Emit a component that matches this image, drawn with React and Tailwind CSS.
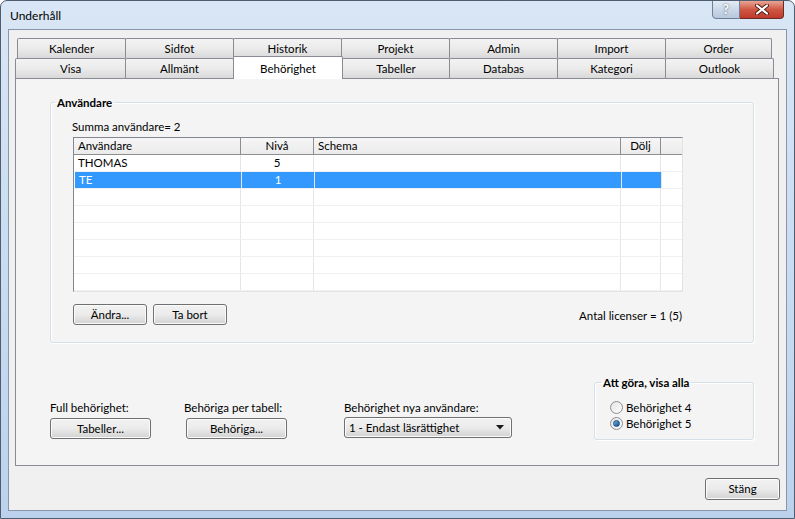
import React from "react";

const font = { fontFamily: '"Segoe UI", Lato, "Liberation Sans", sans-serif' };

const btnBase =
  "flex items-center h-[21px] rounded-[3px] border border-[#707070] bg-linear-to-b from-[#f2f2f2] via-[#ebebeb] to-[#d2d2d2] shadow-[inset_0_0_0_1px_#fbfbfb] text-[11.5px] text-black";
const btn = `${btnBase} justify-center`;

const rowTabs1 = [
  ["Kalender", "w-[109px]"],
  ["Sidfot", "w-[109px]"],
  ["Historik", "w-[109px]"],
  ["Projekt", "w-[109px]"],
  ["Admin", "w-[109px]"],
  ["Import", "w-[109px]"],
  ["Order", "w-[107px]"],
];

const rowTabs2 = [
  ["Visa", "w-[111px]"],
  ["Allmänt", "w-[109px]"],
  ["Behörighet", "w-[110px]"],
  ["Tabeller", "w-[108px]"],
  ["Databas", "w-[109px]"],
  ["Kategori", "w-[109px]"],
  ["Outlook", "w-[109px]"],
];

const users = [
  { name: "THOMAS", level: "5" },
  { name: "TE", level: "1", selected: true },
];

function Radio({ checked, label }) {
  return (
    <div className="flex items-center gap-[3px] h-[16px]">
      <div className="w-[13px] h-[13px] rounded-full border border-[#8e8f8f] bg-linear-to-br from-[#e6e6e6] to-[#fbfbfb] flex items-center justify-center">
        {checked && (
          <div className="w-[7px] h-[7px] rounded-full bg-linear-to-br from-[#6fb1e8] to-[#104f8f] border border-[#1b4f86]" />
        )}
      </div>
      <span className="text-[11.5px] text-black">{label}</span>
    </div>
  );
}

function Tab({ label, w, active }) {
  if (active) {
    return (
      <div
        className={`${w} -mr-px h-[23px] -mt-[2px] border border-b-0 border-[#898c95] rounded-t-[2px] bg-white flex items-start pt-[3px] justify-center text-[11.5px] text-black relative z-20`}
      >
        {label}
      </div>
    );
  }
  return (
    <div
      className={`${w} -mr-px border border-b-0 border-[#898c95] rounded-t-[2px] bg-linear-to-b from-[#f3f3f3] via-[#ebebeb] to-[#d9d9d9] flex items-center justify-center text-[11.5px] text-black`}
    >
      {label}
    </div>
  );
}

export default function App() {
  return (
    <div
      style={font}
      className="w-[795px] h-[519px] flex flex-col bg-linear-to-b from-[#d9e6f5] to-[#bcd2ec] border border-[#4e5d70] rounded-t-[7px] overflow-hidden"
    >
      {/* Title bar */}
      <div className="h-[28px] flex items-start">
        <div className="flex-1 pl-[9px] pt-[6px] text-[12px] text-black">Underhåll</div>
        <div className="flex mr-[10px] mt-[-1px]">
          <div className="w-[28px] h-[19px] border border-[#6f7f94] rounded-bl-[4px] bg-linear-to-b from-[#e4ecf5] via-[#cbd8e8] to-[#b7c8dc] flex items-center justify-center text-[13px] font-bold text-white [text-shadow:0_0_2px_#3c4a5c]">
            ?
          </div>
          <div className="w-[44px] h-[19px] border border-[#6b2a23] border-l-0 rounded-br-[4px] bg-linear-to-b from-[#e8a595] via-[#cf5744] to-[#c0392b] flex items-center justify-center">
            <svg width="14" height="11" viewBox="0 0 14 11">
              <path d="M2 1.5 L12 9.5 M12 1.5 L2 9.5" stroke="#4a1d18" strokeWidth="4" strokeLinecap="round" />
              <path d="M2 1.5 L12 9.5 M12 1.5 L2 9.5" stroke="#ffffff" strokeWidth="2.2" strokeLinecap="round" />
            </svg>
          </div>
        </div>
      </div>

      {/* Client area */}
      <div className="flex-1 mx-[7px] mb-[7px] bg-[#f0f0f0] border border-[#8796ab] flex flex-col">
        <div className="pl-[6px] pr-[8px] pt-[8px]">
          {/* Tab rows */}
          <div className="flex pl-[2px] h-[20px]">
            {rowTabs1.map(([t, w]) => (
              <Tab key={t} label={t} w={w} />
            ))}
          </div>
          <div className="flex h-[20px] relative z-10">
            {rowTabs2.map(([t, w]) => (
              <Tab key={t} label={t} w={w} active={t === "Behörighet"} />
            ))}
          </div>

          {/* Tab panel */}
          <div className="w-[764px] h-[388px] border border-[#898c95] bg-[#f4f4f4] flex flex-col">
            {/* Användare group */}
            <fieldset className="mt-[15px] ml-[34px] mr-[24px] h-[249px] border border-[#d5dfe5] rounded-[3px] shadow-[inset_1px_1px_0_#ffffff,1px_1px_0_#ffffff] pl-[21px] pr-[69px]">
              <legend className="-ml-[17px] px-[2px] text-[11.5px] font-bold text-black">Användare</legend>
              <div className="text-[11.5px] text-black mt-[9px] h-[14px] leading-[14px]">Summa användare= 2</div>

              {/* Table */}
              <div className="mt-[3px] ml-[1px] w-[610px] h-[155px] border border-[#828790] border-r-[#e3e3e3] border-b-[#e3e3e3] bg-white flex flex-col overflow-hidden">
                <div className="flex h-[17px] bg-linear-to-b from-[#f6f6f6] to-[#ebebeb] border-b border-[#8e8e8e] text-[11.5px] text-black leading-[16px]">
                  <div className="w-[167px] border-r border-[#8e8e8e] pl-[4px]">Användare</div>
                  <div className="w-[73px] border-r border-[#8e8e8e] text-center">Nivå</div>
                  <div className="w-[307px] border-r border-[#8e8e8e] pl-[4px]">Schema</div>
                  <div className="w-[40px] border-r border-[#8e8e8e] text-center">Dölj</div>
                  <div className="flex-1" />
                </div>
                {Array.from({ length: 8 }).map((_, i) => {
                  const u = users[i];
                  const sel = u && u.selected;
                  return (
                    <div key={i} className="flex h-[17px] text-[11.5px] leading-[16px] border-b border-[#f0f0f0]">
                      <div className={`w-[167px] border-r border-[#e6e6e6] pl-[4px] ${sel ? "bg-[#3399ff] text-white ml-[1px]" : "text-black"}`}>
                        {u ? u.name : ""}
                      </div>
                      <div className={`w-[73px] border-r border-[#e6e6e6] text-center ${sel ? "bg-[#3399ff] text-white" : "text-black"}`}>
                        {u ? u.level : ""}
                      </div>
                      <div className={`w-[307px] border-r border-[#e6e6e6] ${sel ? "bg-[#3399ff]" : ""}`} />
                      <div className={`w-[40px] border-r border-[#e6e6e6] ${sel ? "bg-[#3399ff]" : ""}`} />
                      <div className="flex-1" />
                    </div>
                  );
                })}
              </div>

              {/* Buttons row */}
              <div className="flex items-center mt-[12px] ml-[1px] w-[610px]">
                <div className={`${btn} w-[74px]`}>Ändra...</div>
                <div className={`${btn} w-[74px] ml-[6px]`}>Ta bort</div>
                <div className="flex-1" />
                <div className="text-[11.5px] text-black pr-[1px] mt-[2px]">Antal licenser = 1 (5)</div>
              </div>
            </fieldset>

            {/* Bottom row */}
            <div className="flex items-end mt-[31px] ml-[34px] mr-[24px]">
              <div className="flex flex-col mb-[1px]">
                <span className="text-[11.5px] text-black leading-[14px]">Full behörighet:</span>
                <div className={`${btn} w-[101px] mt-[3px]`}>Tabeller...</div>
              </div>
              <div className="flex flex-col ml-[33px] mb-[1px]">
                <span className="text-[11.5px] text-black leading-[14px]">Behöriga per tabell:</span>
                <div className={`${btn} w-[101px] mt-[3px] ml-[2px]`}>Behöriga...</div>
              </div>
              <div className="flex flex-col ml-[57px] mb-[2px]">
                <span className="text-[11.5px] text-black leading-[14px]">Behörighet nya användare:</span>
                <div className={`${btnBase} w-[168px] mt-[2px] justify-between pl-[4px] pr-[7px]`}>
                  <span>1 - Endast läsrättighet</span>
                  <svg width="8" height="5" viewBox="0 0 8 5">
                    <path d="M0 0 H8 L4 4.5 Z" fill="#1a1a1a" />
                  </svg>
                </div>
              </div>
              <div className="flex-1" />
              <fieldset className="w-[160px] h-[66px] border border-[#d5dfe5] rounded-[3px] shadow-[inset_1px_1px_0_#ffffff,1px_1px_0_#ffffff] pl-[15px]">
                <legend className="-ml-[9px] px-[2px] text-[11.5px] font-bold text-black">Att göra, visa alla</legend>
                <div className="mt-[8px] flex flex-col">
                  <Radio label="Behörighet 4" />
                  <Radio label="Behörighet 5" checked />
                </div>
              </fieldset>
            </div>
          </div>
        </div>

        {/* Footer */}
        <div className="flex justify-end pr-[6px] mt-[12px]">
          <div className={`${btn} w-[75px] h-[22px]`}>Stäng</div>
        </div>
      </div>
    </div>
  );
}
